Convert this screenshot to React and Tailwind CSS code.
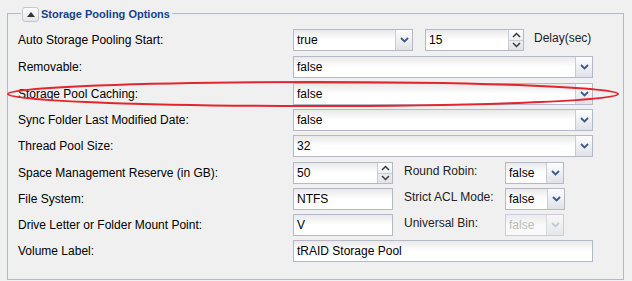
import React from 'react';

const font = { fontFamily: '"Liberation Sans", Arial, sans-serif' };

const Chevron = ({ disabled }) => (
  <svg width="9" height="6" viewBox="0 0 9 6">
    <path d="M1 1 L4.5 4.5 L8 1" fill="none" stroke={disabled ? '#aab4c4' : '#3a5a8c'} strokeWidth="1.8" />
  </svg>
);

const Combo = ({ value, w, disabled }) => (
  <div className={`flex h-[22px] ${w} border border-[#b5b8c8] ${disabled ? 'opacity-60' : ''}`}>
    <div className="flex-1 flex items-center pl-[3px] bg-gradient-to-b from-[#e9e9e9] via-white to-white text-[12px] text-black">
      <span className={disabled ? 'text-[#999]' : ''}>{value}</span>
    </div>
    <div className="w-[17px] flex items-center justify-center border-l border-[#c8ccd6] bg-gradient-to-b from-[#fdfdfd] to-[#dfe2e8]">
      <Chevron disabled={disabled} />
    </div>
  </div>
);

const Spinner = ({ value, w }) => (
  <div className={`flex h-[22px] ${w} border border-[#b5b8c8]`}>
    <div className="flex-1 flex items-center pl-[3px] bg-gradient-to-b from-[#e9e9e9] via-white to-white text-[12px]">{value}</div>
    <div className="w-[15px] flex flex-col border-l border-[#c8ccd6] bg-gradient-to-b from-[#fdfdfd] to-[#dfe2e8]">
      <div className="flex-1 flex items-center justify-center border-b border-[#c8ccd6]">
        <svg width="9" height="6" viewBox="0 0 9 6"><path d="M1 5 L4.5 1.5 L8 5" fill="none" stroke="#3a3a3a" strokeWidth="1.5" /></svg>
      </div>
      <div className="flex-1 flex items-center justify-center">
        <svg width="9" height="6" viewBox="0 0 9 6"><path d="M1 1 L4.5 4.5 L8 1" fill="none" stroke="#3a3a3a" strokeWidth="1.5" /></svg>
      </div>
    </div>
  </div>
);

const Text = ({ value, w }) => (
  <div className={`flex items-center h-[22px] ${w} border border-[#b5b8c8] pl-[3px] bg-gradient-to-b from-[#e9e9e9] via-white to-white text-[12px]`}>
    {value}
  </div>
);

const Row = ({ label, children, extra }) => (
  <div className={`flex items-center h-[22px] ${extra || ''}`}>
    <div className="w-[275px] text-[12px] text-black">{label}</div>
    {children}
  </div>
);

const Side = ({ label, children }) => (
  <div className="flex items-center">
    <div className="w-[101px] ml-[11px] text-[12px] text-[#222] -mt-[4px]">{label}</div>
    {children}
  </div>
);

export default function App() {
  return (
    <div className="w-[632px] h-[281px] bg-[#f0f0f0] pt-[6px] pl-[7px] pr-[8px] relative" style={font}>
      <div className="relative border border-[#b5b8c8] h-[267px] mt-[7px] pl-[10px] pt-[15px] flex flex-col gap-[4px]">
        <div className="absolute -top-[8px] left-[13px] flex items-center gap-[2px] bg-[#f0f0f0] pr-[2px] pl-[1px]">
          <div className="w-[17px] h-[15px] rounded-[3px] border border-[#c4c7ce] bg-gradient-to-b from-white to-[#e4e6ea] flex items-center justify-center">
            <svg width="8" height="5" viewBox="0 0 8 5"><path d="M0 5 L4 0 L8 5 Z" fill="#333" /></svg>
          </div>
          <span className="text-[11px] font-bold text-[#15428b]">Storage Pooling Options</span>
        </div>

        <Row label="Auto Storage Pooling Start:">
          <Combo value="true" w="w-[120px]" />
          <div className="ml-[12px]"><Spinner value="15" w="w-[99px]" /></div>
          <div className="ml-[10px] -mt-[4px] text-[12px] text-[#222]">Delay(sec)</div>
        </Row>
        <Row label="Removable:" extra="mt-[1px]"><Combo value="false" w="w-[300px]" /></Row>
        <Row label="Storage Pool Caching:" extra="mt-[1px]"><Combo value="false" w="w-[300px]" /></Row>
        <Row label="Sync Folder Last Modified Date:"><Combo value="false" w="w-[300px]" /></Row>
        <Row label="Thread Pool Size:"><Combo value="32" w="w-[300px]" /></Row>
        <Row label="Space Management Reserve (in GB):" extra="mt-[1px]">
          <Spinner value="50" w="w-[100px]" />
          <Side label="Round Robin:"><Combo value="false" w="w-[59px]" /></Side>
        </Row>
        <Row label="File System:">
          <Text value="NTFS" w="w-[100px]" />
          <Side label="Strict ACL Mode:"><Combo value="false" w="w-[60px]" /></Side>
        </Row>
        <Row label="Drive Letter or Folder Mount Point:">
          <Text value="V" w="w-[100px]" />
          <Side label="Universal Bin:"><Combo value="false" w="w-[59px]" disabled /></Side>
        </Row>
        <Row label="Volume Label:"><Text value="tRAID Storage Pool" w="w-[300px]" /></Row>
      </div>

      <svg className="absolute left-0 top-0 pointer-events-none" width="632" height="281">
        <ellipse cx="313" cy="94" rx="305" ry="12" fill="none" stroke="#e3262d" strokeWidth="2" />
      </svg>
    </div>
  );
}
